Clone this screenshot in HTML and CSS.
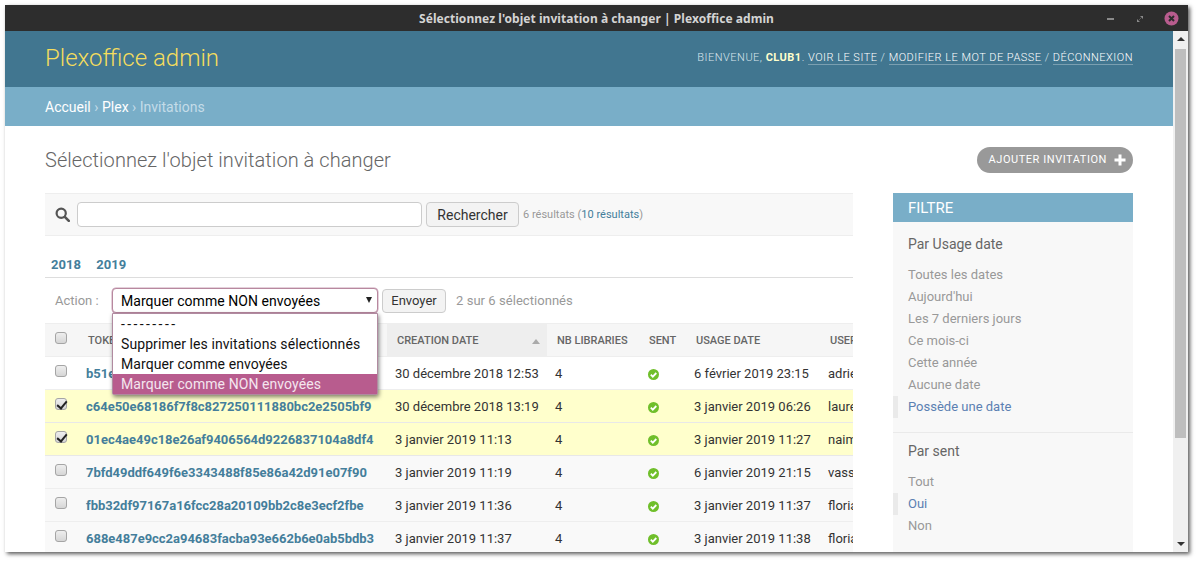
FILE: index.html
```html
<!DOCTYPE html>
<html lang="fr">
<head>
<meta charset="utf-8">
<title>Sélectionnez l'objet invitation à changer | Plexoffice admin</title>
<link rel="stylesheet" href="styles.css">
</head>
<body>
<div class="window">
  <div class="titlebar">
    <span class="title">Sélectionnez l'objet invitation à changer | Plexoffice admin</span>
    <div class="controls">
      <svg class="ctl" width="10" height="10" viewBox="0 0 10 10"><rect x="1" y="4" width="7" height="2" fill="#8a8a8a"/></svg>
      <svg class="ctl" width="10" height="10" viewBox="0 0 10 10"><path d="M5 2h3v3zM2 5v3h3z" fill="#8a8a8a"/><path d="M4 6l2-2" stroke="#5a5a5a"/></svg>
      <svg class="close" width="15" height="15" viewBox="0 0 15 15"><circle cx="7.5" cy="7.5" r="7" fill="#b85c8e"/><path d="M5 5l5 5M10 5l-5 5" stroke="#2d2d2d" stroke-width="2"/></svg>
    </div>
  </div>
  <div class="browser">
    <div class="page">
      <header class="header">
        <a class="brand">Plexoffice admin</a>
        <div class="tools">BIENVENUE, <strong>CLUB1</strong>. <a>VOIR LE SITE</a> / <a>MODIFIER LE MOT DE PASSE</a> / <a>DÉCONNEXION</a></div>
      </header>
      <nav class="crumbs"><a>Accueil</a> <span class="sep">›</span> <a>Plex</a> <span class="sep">›</span> Invitations</nav>
      <main class="content">
        <div class="headline">
          <h1>Sélectionnez l'objet invitation à changer</h1>
          <a class="addlink">AJOUTER INVITATION
            <svg width="12" height="12" viewBox="0 0 12 12"><path d="M4.5 .5h3v4h4v3h-4v4h-3v-4h-4v-3h4z" fill="#fff"/></svg>
          </a>
        </div>
        <div class="columns">
          <section class="changelist">
            <div class="search">
              <svg class="glass" width="15" height="15" viewBox="0 0 15 15"><circle cx="6.2" cy="6.2" r="4.6" fill="none" stroke="#555" stroke-width="2.2"/><path d="M9.8 9.8l4 4" stroke="#555" stroke-width="2.6" stroke-linecap="round"/></svg>
              <span class="field"></span>
              <span class="btn btn-search">Rechercher</span>
              <span class="count">6 résultats (<a>10 résultats</a>)</span>
            </div>
            <div class="years"><a>2018</a><a>2019</a></div>
            <div class="actions">
              <span class="action-label">Action :</span>
              <div class="select">Marquer comme NON envoyées<span class="arrow"></span>
                <ul class="options">
                  <li class="dash">---------</li>
                  <li>Supprimer les invitations sélectionnés</li>
                  <li>Marquer comme envoyées</li>
                  <li class="picked">Marquer comme NON envoyées</li>
                </ul>
              </div>
              <span class="btn btn-go">Envoyer</span>
              <span class="selected">2 sur 6 sélectionnés</span>
            </div>
            <table>
              <colgroup><col class="c1"><col class="c2"><col class="c3"><col class="c4"><col class="c5"><col class="c6"><col class="c7"></colgroup>
              <thead>
                <tr>
                  <th><span class="box"></span></th>
                  <th>TOKEN</th>
                  <th class="sorted">CREATION DATE<span class="sortup"></span></th>
                  <th>NB LIBRARIES</th>
                  <th>SENT</th>
                  <th>USAGE DATE</th>
                  <th>USER</th>
                </tr>
              </thead>
              <tbody>
                <tr>
                  <td><span class="box"></span></td><td><a>b51e3a2c70d94f1e8a6b5c0d7f312e94a8c6</a></td><td>30 décembre 2018 12:53</td><td>4</td>
                  <td><svg class="ok" width="13" height="13" viewBox="0 0 13 13"><circle cx="6.5" cy="6.5" r="5.5" fill="#70bf2b"/><path d="M3.8 6.6l2 2 3.5-3.6" fill="none" stroke="#fff" stroke-width="1.8"/></svg></td>
                  <td>6 février 2019 23:15</td><td>adrien</td>
                </tr>
                <tr class="sel">
                  <td><span class="box checked"></span></td><td><a>c64e50e68186f7f8c827250111880bc2e2505bf9</a></td><td>30 décembre 2018 13:19</td><td>4</td>
                  <td><svg class="ok" width="13" height="13" viewBox="0 0 13 13"><circle cx="6.5" cy="6.5" r="5.5" fill="#70bf2b"/><path d="M3.8 6.6l2 2 3.5-3.6" fill="none" stroke="#fff" stroke-width="1.8"/></svg></td>
                  <td>3 janvier 2019 06:26</td><td>laurent</td>
                </tr>
                <tr class="sel">
                  <td><span class="box checked"></span></td><td><a>01ec4ae49c18e26af9406564d9226837104a8df4</a></td><td>3 janvier 2019 11:13</td><td>4</td>
                  <td><svg class="ok" width="13" height="13" viewBox="0 0 13 13"><circle cx="6.5" cy="6.5" r="5.5" fill="#70bf2b"/><path d="M3.8 6.6l2 2 3.5-3.6" fill="none" stroke="#fff" stroke-width="1.8"/></svg></td>
                  <td>3 janvier 2019 11:27</td><td>naima</td>
                </tr>
                <tr class="alt">
                  <td><span class="box"></span></td><td><a>7bfd49ddf649f6e3343488f85e86a42d91e07f90</a></td><td>3 janvier 2019 11:19</td><td>4</td>
                  <td><svg class="ok" width="13" height="13" viewBox="0 0 13 13"><circle cx="6.5" cy="6.5" r="5.5" fill="#70bf2b"/><path d="M3.8 6.6l2 2 3.5-3.6" fill="none" stroke="#fff" stroke-width="1.8"/></svg></td>
                  <td>6 janvier 2019 21:15</td><td>vassili</td>
                </tr>
                <tr class="alt">
                  <td><span class="box"></span></td><td><a>fbb32df97167a16fcc28a20109bb2c8e3ecf2fbe</a></td><td>3 janvier 2019 11:36</td><td>4</td>
                  <td><svg class="ok" width="13" height="13" viewBox="0 0 13 13"><circle cx="6.5" cy="6.5" r="5.5" fill="#70bf2b"/><path d="M3.8 6.6l2 2 3.5-3.6" fill="none" stroke="#fff" stroke-width="1.8"/></svg></td>
                  <td>3 janvier 2019 11:37</td><td>florian</td>
                </tr>
                <tr class="alt">
                  <td><span class="box"></span></td><td><a>688e487e9cc2a94683facba93e662b6e0ab5bdb3</a></td><td>3 janvier 2019 11:37</td><td>4</td>
                  <td><svg class="ok" width="13" height="13" viewBox="0 0 13 13"><circle cx="6.5" cy="6.5" r="5.5" fill="#70bf2b"/><path d="M3.8 6.6l2 2 3.5-3.6" fill="none" stroke="#fff" stroke-width="1.8"/></svg></td>
                  <td>3 janvier 2019 11:38</td><td>florian</td>
                </tr>
              </tbody>
            </table>
          </section>
          <aside class="filter">
            <h2>FILTRE</h2>
            <div class="group">
              <h3>Par Usage date</h3>
              <ul>
                <li>Toutes les dates</li>
                <li>Aujourd'hui</li>
                <li>Les 7 derniers jours</li>
                <li>Ce mois-ci</li>
                <li>Cette année</li>
                <li>Aucune date</li>
                <li class="on">Possède une date</li>
              </ul>
            </div>
            <div class="group last">
              <h3>Par sent</h3>
              <ul>
                <li>Tout</li>
                <li class="on">Oui</li>
                <li>Non</li>
              </ul>
            </div>
          </aside>
        </div>
      </main>
    </div>
    <div class="scrollbar">
      <span class="up"></span>
      <span class="thumb"></span>
      <span class="down"></span>
    </div>
  </div>
</div>
</body>
</html>
```
FILE: styles.css
```css
* { box-sizing: border-box; }
html, body { margin: 0; height: 100%; overflow: hidden; }
body { background: #fff; font-family: Roboto, "Liberation Sans", sans-serif; color: #333; font-size: 13px; }
ul { list-style: none; margin: 0; padding: 0; }
h1, h2, h3 { margin: 0; font-weight: 400; }

.window { margin: 5px 0 0 5px; width: 1183px; height: 547px; display: flex; flex-direction: column; box-shadow: 2px 2px 4px rgba(0,0,0,.65); overflow: hidden; }
.titlebar { height: 26px; flex: none; background: #2d2d2d; position: relative; display: flex; align-items: center; justify-content: center; }
.title { color: #d4d4d4; font-family: "Noto Sans", "DejaVu Sans", sans-serif; font-weight: 700; font-size: 12px; letter-spacing: .05px; }
.controls { position: absolute; right: 9px; top: 6px; display: flex; align-items: center; gap: 19px; }
.ctl, .close { display: block; }

.browser { flex: 1; min-height: 0; display: flex; }
.page { width: 1168px; flex: none; overflow: hidden; background: #fff; }

.header { height: 56px; background: #417690; display: flex; justify-content: space-between; align-items: center; padding: 0 40px 2px; }
.brand { color: #f5dd5d; font-size: 24px; font-weight: 300; }
.tools { color: #d6e4ec; font-size: 11px; font-weight: 300; letter-spacing: .49px; margin-top: -2px; }
.tools strong { color: #ffc; font-weight: 700; }
.tools a { color: #fff; border-bottom: 1px solid rgba(255,255,255,.3); font-weight: 300; }

.crumbs { height: 39px; background: #79aec8; color: #c4dce8; font-size: 14px; padding: 0 40px; display: flex; align-items: center; gap: 3.5px; }
.crumbs a { color: #fff; }
.crumbs .sep { color: #c4dce8; }

.content { padding: 0 40px; }
.headline { height: 67px; display: flex; justify-content: space-between; align-items: center; }
h1 { font-size: 20px; font-weight: 300; color: #666; letter-spacing: .05px; }
.addlink { height: 26px; border-radius: 13px; background: #999; color: #fff; font-size: 11px; font-weight: 400; letter-spacing: .55px; display: flex; align-items: center; gap: 7px; padding: 0 7px 0 12px; }

.columns { display: flex; gap: 40px; align-items: flex-start; }
.changelist { width: 808px; flex: none; }

.search { height: 43px; background: #f8f8f8; border-top: 1px solid #eee; border-bottom: 1px solid #eee; display: flex; align-items: center; padding-left: 10px; }
.glass { margin-right: 7px; }
.field { width: 345px; height: 25px; background: #fff; border: 1px solid #ccc; border-radius: 4px; }
.btn { display: inline-flex; align-items: center; justify-content: center; background: #f3f3f3; border: 1px solid #ccc; border-radius: 4px; color: #333; font-size: 14px; }
.btn-search { width: 93px; height: 25px; margin-left: 4px; }
.count { margin-left: 4px; font-size: 11px; color: #999; letter-spacing: .01px; }
.count a { color: #447e9b; }

.years { height: 42px; border-bottom: 1px solid #ddd; display: flex; align-items: center; gap: 15.5px; padding: 16px 0 0 6px; font-size: 13px; font-weight: 700; }
.years a { color: #447e9b; }

.actions { height: 45px; display: flex; align-items: center; padding-left: 10px; position: relative; }
.action-label { width: 57px; color: #999; font-size: 13px; }
.select { width: 266px; height: 25px; background: #fff; border: 1px solid #b8889f; border-radius: 4px; box-shadow: 0 0 0 .5px #c9a3b8; font-size: 14px; letter-spacing: .05px; color: #000; padding: 1px 0 0 8px; display: flex; align-items: center; position: relative; z-index: 2; }
.arrow { position: absolute; right: 5px; top: 8px; border-left: 3.5px solid transparent; border-right: 3.5px solid transparent; border-top: 6px solid #222; }
.options { position: absolute; left: -1px; top: 24px; width: 266px; height: 82px; background: #fff; border: 1px solid #b08aa0; border-radius: 0 0 2px 2px; box-shadow: 1px 2px 4px rgba(0,0,0,.5); }
.options li { height: 20px; line-height: 20px; padding-left: 8px; color: #111; letter-spacing: .08px; }
.options li.dash { letter-spacing: 2.4px; }
.options li.picked { background: #b85c8e; color: #f4e6ee; }
.btn-go { width: 64px; height: 24px; margin-left: 4px; font-size: 13px; }
.selected { margin-left: 10px; color: #999; font-size: 13px; letter-spacing: .05px; }

table { width: 808px; table-layout: fixed; border-collapse: collapse; }
.c1 { width: 33px; } .c2 { width: 309px; } .c3 { width: 160px; } .c4 { width: 92px; } .c5 { width: 47px; } .c6 { width: 134px; } .c7 { width: 33px; }
th { height: 33px; background: #f6f6f6; color: #666; font-size: 11px; font-weight: 500; text-align: left; padding: 0 0 0 10px; border-top: 1px solid #eee; border-bottom: 1px solid #eee; white-space: nowrap; overflow: hidden; position: relative; }
th.sorted { background: #eee; }
th:first-child, td:first-child { padding-left: 10px; }
.sortup { position: absolute; right: 7px; top: 15px; border-left: 4.5px solid transparent; border-right: 4.5px solid transparent; border-bottom: 5px solid #aaa; }
td { height: 33px; font-size: 13px; color: #333; padding: 0 0 0 8px; border-bottom: 1px solid #eee; white-space: nowrap; overflow: hidden; }
td a { color: #447e9b; font-weight: 700; font-size: 13px; letter-spacing: -.02px; }
tr.sel td { background: #ffc; border-bottom-color: #e8e8e8; }
tr.alt td { background: #f9f9f9; }
.ok { display: block; margin: 2px 0 0; }
.box { display: block; width: 12px; height: 12px; border: 1px solid #a5a5a5; border-radius: 3px; background: linear-gradient(#eee, #d6d6d6); position: relative; top: -2px; }
.box.checked::after { content: ""; position: absolute; left: 3px; top: 0; width: 4px; height: 8px; border: solid #222; border-width: 0 2px 2px 0; transform: rotate(40deg); }

.filter { width: 240px; flex: none; background: #f8f8f8; height: 370px; }
.filter h2 { height: 29px; line-height: 30px; background: #79aec8; color: #fff; font-size: 15px; padding-left: 15px; }
.group { border-bottom: 1px solid #eaeaea; height: 211px; }
.group.last { border-bottom: 0; height: auto; }
.group h3 { font-size: 14px; color: #666; padding: 14px 0 0 15px; height: 42px; }
.group.last h3 { padding-top: 10px; height: 38px; }
.group li { height: 22px; line-height: 22px; font-size: 13px; color: #999; font-weight: 400; padding-left: 15px; position: relative; }
.group li.on { color: #5b80b2; font-weight: 400; }
.group li.on::before { content: ""; position: absolute; left: 0; top: 0; width: 5px; height: 22px; background: #eaeaea; }

.scrollbar { flex: 1; background: #f0f0f0; position: relative; display: flex; flex-direction: column; align-items: center; }
.up { margin-top: 6px; border-left: 4px solid transparent; border-right: 4px solid transparent; border-bottom: 4px solid #333; }
.thumb { width: 11px; height: 389px; background: #bebebe; margin-top: 8px; }
.down { position: absolute; bottom: 6px; border-left: 4px solid transparent; border-right: 4px solid transparent; border-top: 4px solid #333; }
```
